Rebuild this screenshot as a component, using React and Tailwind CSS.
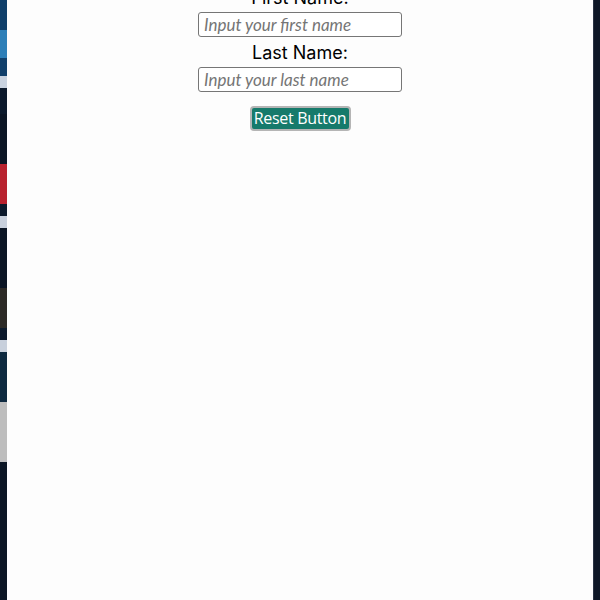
import React from "react";

export default function App() {
  return (
    <div className="flex h-[600px] w-[600px] overflow-hidden bg-white">
      <div className="flex w-[7px] shrink-0 flex-col">
        <div className="h-[30px] bg-[#0f3f6a]" />
        <div className="h-[28px] bg-[#2d7fb8]" />
        <div className="h-[18px] bg-[#11406b]" />
        <div className="h-[12px] bg-[#c9d3e0]" />
        <div className="h-[26px] bg-[#0c1a2c]" />
        <div className="h-[50px] bg-[#0b1524]" />
        <div className="h-[40px] bg-[#b8222e]" />
        <div className="h-[12px] bg-[#0c1a2c]" />
        <div className="h-[12px] bg-[#c8d0dc]" />
        <div className="h-[60px] bg-[#0b1524]" />
        <div className="h-[40px] bg-[#2c2a26]" />
        <div className="h-[12px] bg-[#0c1a2c]" />
        <div className="h-[12px] bg-[#c8d0dc]" />
        <div className="h-[50px] bg-[#0e2a40]" />
        <div className="h-[60px] bg-[#bdbdbd]" />
        <div className="flex-1 bg-[#0b1524]" />
      </div>
      <div className="flex flex-1 flex-col items-center bg-[#fdfdfd]">
        <div className="mt-[-16px] flex flex-col items-center">
          <label className="h-[28px] text-[18px] leading-[28px] text-black font-['Inter',sans-serif]">
            First Name:
          </label>
          <input
            placeholder="Input your first name"
            className="h-[25px] w-[204px] rounded-[3px] border border-[#767676] bg-white px-[5px] text-[17px] italic text-black placeholder:text-[#757575] font-['Lato',sans-serif] outline-none"
          />
          <label className="mt-[1px] h-[29px] text-[18px] leading-[29px] text-black font-['Inter',sans-serif]">
            Last Name:
          </label>
          <input
            placeholder="Input your last name"
            className="h-[25px] w-[204px] rounded-[3px] border border-[#767676] bg-white px-[5px] text-[17px] italic text-black placeholder:text-[#757575] font-['Lato',sans-serif] outline-none"
          />
          <button className="mt-[14px] h-[25px] w-[101px] whitespace-nowrap rounded-[4px] border-2 border-[#b5b5b5] bg-[#167a6b] p-0 text-[16px] leading-[21px] text-white font-['Open_Sans',sans-serif] tracking-[-0.3px]">
            Reset Button
          </button>
        </div>
      </div>
      <div className="w-[7px] shrink-0 border-l border-[#2a3344] bg-[#0e1727]" />
    </div>
  );
}
